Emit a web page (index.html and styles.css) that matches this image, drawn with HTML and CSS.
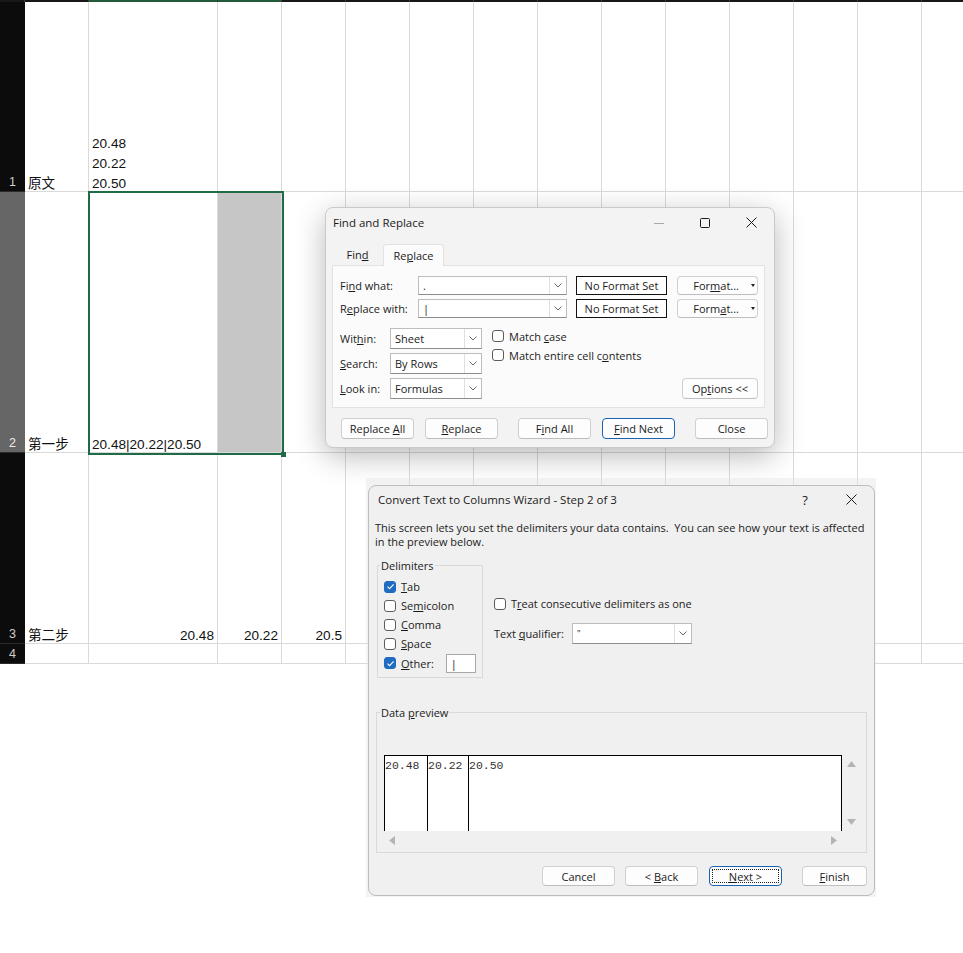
FILE: index.html
```html
<!DOCTYPE html>
<html lang="en">
<head>
  <meta charset="UTF-8">
  <meta name="viewport" content="width=device-width, initial-scale=1.0">
  <title>Text to Columns</title>
  <link rel="stylesheet" href="styles.css">
</head>
<body>
<div class="page">

  <!-- worksheet -->
  <div class="sheet">
    <div class="edge"></div><div class="edge"></div><div class="edge sel"></div><div class="edge sel"></div>
    <div class="edge"></div><div class="edge"></div><div class="edge"></div><div class="edge"></div><div class="edge"></div><div class="edge"></div>
    <div class="edge"></div><div class="edge"></div><div class="edge"></div><div class="edge"></div><div class="edge"></div>

    <div class="rh">1</div>
    <div class="c"><span>原文</span></div>
    <div class="c"><span>20.48<br>20.22<br>20.50</span></div>
    <div class="c"></div>
    <div class="c"></div><div class="c"></div><div class="c"></div><div class="c"></div><div class="c"></div><div class="c"></div>
    <div class="c"></div><div class="c"></div><div class="c"></div><div class="c"></div><div class="c"></div>

    <div class="rh active">2</div>
    <div class="c"><span>第一步</span></div>
    <div class="c"><span>20.48|20.22|20.50</span></div>
    <div class="c shade"></div>
    <div class="c"></div><div class="c"></div><div class="c"></div><div class="c"></div><div class="c"></div><div class="c"></div>
    <div class="c"></div><div class="c"></div><div class="c"></div><div class="c"></div><div class="c"></div>

    <div class="rh">3</div>
    <div class="c"><span>第二步</span></div>
    <div class="c num"><span>20.48</span></div>
    <div class="c num"><span>20.22</span></div>
    <div class="c num"><span>20.5</span></div>
    <div class="c"></div><div class="c"></div><div class="c"></div><div class="c"></div><div class="c"></div>
    <div class="c"></div><div class="c"></div><div class="c"></div><div class="c"></div><div class="c"></div>

    <div class="rh short">4</div>
    <div class="c"></div><div class="c"></div><div class="c"></div>
    <div class="c"></div><div class="c"></div><div class="c"></div><div class="c"></div><div class="c"></div><div class="c"></div>
    <div class="c"></div><div class="c"></div><div class="c"></div><div class="c"></div><div class="c"></div>
  </div>

  <div class="selection"><span class="handle"></span></div>

  <!-- Find and Replace -->
  <div class="find">
    <div class="titlebar">
      <span class="title">Find and Replace</span>
      <div class="winbtns">
        <span class="wb"><svg width="10" height="10" viewBox="0 0 10 10"><line x1="0" y1="5.5" x2="10" y2="5.5" stroke="#a8a8a8" stroke-width="1"/></svg></span>
        <span class="wb"><svg width="10" height="10" viewBox="0 0 10 10"><rect x="0.5" y="0.5" width="9" height="9" rx="1" fill="none" stroke="#1b1b1b" stroke-width="1"/></svg></span>
        <span class="wb"><svg width="11" height="11" viewBox="0 0 11 11"><path d="M0.5 0.5 L10.5 10.5 M10.5 0.5 L0.5 10.5" stroke="#1b1b1b" stroke-width="1"/></svg></span>
      </div>
    </div>

    <div class="tabs">
      <span class="tab"><span>Fin<u>d</u></span></span>
      <span class="tab active"><span>Re<u>p</u>lace</span></span>
    </div>

    <div class="panel">
      <div class="frow">
        <span class="flabel">Fi<u>n</u>d what:</span>
        <div class="combo wide"><span class="val">.</span><span class="arrow"><svg width="8" height="5" viewBox="0 0 8 5"><polyline points="0.5,0.5 4,4 7.5,0.5" fill="none" stroke="#6a6a6a"/></svg></span></div>
        <div class="nofmt">No Format Set</div>
        <div class="btn fmt"><span>For<u>m</u>at...</span><i class="tri"></i></div>
      </div>
      <div class="frow">
        <span class="flabel">R<u>e</u>place with:</span>
        <div class="combo wide"><span class="val">|</span><span class="arrow"><svg width="8" height="5" viewBox="0 0 8 5"><polyline points="0.5,0.5 4,4 7.5,0.5" fill="none" stroke="#6a6a6a"/></svg></span></div>
        <div class="nofmt">No Format Set</div>
        <div class="btn fmt"><span>Form<u>a</u>t...</span><i class="tri"></i></div>
      </div>

      <div class="opts">
        <div class="selects">
          <div class="srow">
            <span class="slabel">Wit<u>h</u>in:</span>
            <div class="combo sel"><span class="val">Sheet</span><span class="arrow"><svg width="8" height="5" viewBox="0 0 8 5"><polyline points="0.5,0.5 4,4 7.5,0.5" fill="none" stroke="#6a6a6a"/></svg></span></div>
          </div>
          <div class="srow">
            <span class="slabel"><u>S</u>earch:</span>
            <div class="combo sel"><span class="val">By Rows</span><span class="arrow"><svg width="8" height="5" viewBox="0 0 8 5"><polyline points="0.5,0.5 4,4 7.5,0.5" fill="none" stroke="#6a6a6a"/></svg></span></div>
          </div>
          <div class="srow">
            <span class="slabel"><u>L</u>ook in:</span>
            <div class="combo sel"><span class="val">Formulas</span><span class="arrow"><svg width="8" height="5" viewBox="0 0 8 5"><polyline points="0.5,0.5 4,4 7.5,0.5" fill="none" stroke="#6a6a6a"/></svg></span></div>
          </div>
        </div>
        <div class="checks">
          <div class="crow"><span class="cb"></span><span>Match <u>c</u>ase</span></div>
          <div class="crow"><span class="cb"></span><span>Match entire cell c<u>o</u>ntents</span></div>
        </div>
        <div class="btn options"><span>Op<u>t</u>ions &lt;&lt;</span></div>
      </div>
    </div>

    <div class="actions">
      <div class="btn"><span>Replace <u>A</u>ll</span></div>
      <div class="btn gap-s"><span><u>R</u>eplace</span></div>
      <div class="btn gap-l"><span>F<u>i</u>nd All</span></div>
      <div class="btn gap-s default"><span><u>F</u>ind Next</span></div>
      <div class="btn gap-l"><span>Close</span></div>
    </div>
  </div>

  <!-- Convert Text to Columns Wizard -->
  <div class="wiz-frame">
    <div class="wiz">
      <div class="titlebar wiz-title">
        <span class="title">Convert Text to Columns Wizard - Step 2 of 3</span>
        <div class="winbtns">
          <span class="wb help">?</span>
          <span class="wb"><svg width="11" height="11" viewBox="0 0 11 11"><path d="M0.5 0.5 L10.5 10.5 M10.5 0.5 L0.5 10.5" stroke="#1b1b1b" stroke-width="1"/></svg></span>
        </div>
      </div>

      <p class="desc">This screen lets you set the delimiters your data contains.&nbsp; You can see how your text is affected<br>in the preview below.</p>

      <div class="wiz-body">
        <fieldset class="group delims">
          <legend>Delimiters</legend>
          <div class="drow"><span class="cb on"><svg width="9" height="9" viewBox="0 0 9 9"><polyline points="1.5,4.6 3.6,6.6 7.6,2.4" fill="none" stroke="#fff" stroke-width="1.1"/></svg></span><span><u>T</u>ab</span></div>
          <div class="drow"><span class="cb"></span><span>Se<u>m</u>icolon</span></div>
          <div class="drow"><span class="cb"></span><span><u>C</u>omma</span></div>
          <div class="drow"><span class="cb"></span><span><u>S</u>pace</span></div>
          <div class="drow other"><span class="cb on"><svg width="9" height="9" viewBox="0 0 9 9"><polyline points="1.5,4.6 3.6,6.6 7.6,2.4" fill="none" stroke="#fff" stroke-width="1.1"/></svg></span><span><u>O</u>ther:</span><span class="otherbox">|</span></div>
        </fieldset>

        <div class="wiz-right">
          <div class="crow treat"><span class="cb"></span><span>T<u>r</u>eat consecutive delimiters as one</span></div>
          <div class="qrow">
            <span class="qlabel">Text <u>q</u>ualifier:</span>
            <div class="combo qual"><span class="val">"</span><span class="arrow"><svg width="8" height="5" viewBox="0 0 8 5"><polyline points="0.5,0.5 4,4 7.5,0.5" fill="none" stroke="#6a6a6a"/></svg></span></div>
          </div>
        </div>
      </div>

      <fieldset class="group preview-group">
        <legend>Data <u>p</u>review</legend>
        <div class="preview-grid">
          <div class="preview">
            <span class="pcol first">20.48</span>
            <span class="pcol">20.22</span>
            <span class="pcol last">20.50</span>
          </div>
          <div class="vscroll">
            <svg width="9" height="6" viewBox="0 0 9 6"><polygon points="0,6 4.5,0 9,6" fill="#b4b4b4"/></svg>
            <svg width="9" height="6" viewBox="0 0 9 6"><polygon points="0,0 4.5,6 9,0" fill="#b4b4b4"/></svg>
          </div>
          <div class="hscroll">
            <svg width="6" height="9" viewBox="0 0 6 9"><polygon points="6,0 0,4.5 6,9" fill="#b4b4b4"/></svg>
            <svg width="6" height="9" viewBox="0 0 6 9"><polygon points="0,0 6,4.5 0,9" fill="#b4b4b4"/></svg>
          </div>
        </div>
      </fieldset>

      <div class="wiz-actions">
        <div class="btn"><span>Cancel</span></div>
        <div class="btn w-back"><span>&lt; <u>B</u>ack</span></div>
        <div class="btn w-next default"><span class="focus"><span><u>N</u>ext &gt;</span></span></div>
        <div class="btn w-finish"><span><u>F</u>inish</span></div>
      </div>
    </div>
  </div>

</div>
</body>
</html>
```

FILE: styles.css
```css
body {
  margin: 0;
  background: #fff;
  font-family: "Liberation Sans", "Noto Sans CJK SC", sans-serif;
}
.page {
  position: relative;
  width: 963px;
  height: 953px;
  overflow: hidden;
}

/* worksheet */
.sheet {
  display: grid;
  grid-template-columns: 25px 64px 129px repeat(12, 64px);
  grid-template-rows: 2px 190px 261px 191px 20px;
}
.edge {
  background: #181818;
  border-right: 1px solid #3c3c3c;
}
.edge.sel {
  background: #235a3c;
}
.rh {
  display: flex;
  align-items: flex-end;
  justify-content: center;
  padding-bottom: 2px;
  background: #0c0c0c;
  border-bottom: 1px solid #2b2b2b;
  color: #cdcdcd;
  font-size: 12.5px;
  line-height: 14px;
}
.rh.active {
  background: #666;
  color: #eee;
}
.c {
  display: flex;
  align-items: flex-end;
  padding: 0 3px;
  border-right: 1px solid #dadada;
  border-bottom: 1px solid #dadada;
  font-size: 13.6px;
  line-height: 20px;
  color: #111;
  white-space: nowrap;
}
.c span {
  margin-bottom: -3px;
}
.c.num {
  justify-content: flex-end;
}
.c.shade {
  background: #c6c6c6;
}
.selection {
  position: absolute;
  left: 88px;
  top: 191px;
  width: 196px;
  height: 264px;
  box-sizing: border-box;
  border: 2px solid #1f6b45;
}
.handle {
  position: absolute;
  right: -4px;
  bottom: -4px;
  width: 5px;
  height: 5px;
  background: #1f6b45;
}

/* shared dialog bits */
.find, .wiz {
  font-family: "Open Sans", "Noto Sans", sans-serif;
  font-size: 11px;
  color: #1b1b1b;
}
u {
  text-underline-offset: 1px;
}
.titlebar {
  display: flex;
  align-items: center;
  height: 29px;
}
.title {
  padding-left: 7px;
  font-size: 11.5px;
}
.winbtns {
  display: flex;
  margin-left: auto;
  height: 100%;
}
.wb {
  display: flex;
  align-items: center;
  justify-content: center;
  width: 46px;
  height: 100%;
}
.btn {
  display: flex;
  align-items: center;
  justify-content: center;
  box-sizing: border-box;
  height: 21px;
  background: #fdfdfd;
  border: 1px solid #d0d0d0;
  border-bottom-color: #bdbdbd;
  border-radius: 4px;
  white-space: nowrap;
}
.btn.default {
  border-color: #1a63b0;
}
.combo {
  display: flex;
  box-sizing: border-box;
  background: #fff;
  border: 1px solid #bdbdbd;
  border-bottom-color: #8c8c8c;
}
.combo .val {
  flex: 1;
  padding-left: 4px;
  line-height: 17px;
}
.combo .arrow {
  display: flex;
  align-items: center;
  justify-content: center;
  width: 16px;
  border-left: 1px solid #e0e0e0;
}
.cb {
  display: inline-flex;
  align-items: center;
  justify-content: center;
  box-sizing: border-box;
  width: 12px;
  height: 12px;
  margin-right: 5px;
  background: #fff;
  border: 1px solid #5c5c5c;
  border-radius: 3px;
}
.cb.on {
  background: #1f6cc0;
  border-color: #1f6cc0;
}
.crow {
  display: flex;
  align-items: center;
  white-space: nowrap;
}

/* Find and Replace */
.find {
  position: absolute;
  left: 325px;
  top: 207px;
  width: 450px;
  height: 241px;
  box-sizing: border-box;
  background: #f3f3f3;
  border: 1px solid #cacaca;
  border-radius: 8px;
  box-shadow: 0 8px 30px rgba(0, 0, 0, 0.28);
}
.tabs {
  display: flex;
  margin-top: 7px;
  padding-left: 6px;
  height: 21px;
}
.tab {
  display: flex;
  align-items: center;
  justify-content: center;
  width: 51px;
  box-sizing: border-box;
}
.tab.active {
  position: relative;
  width: 61px;
  height: 22px;
  background: #fbfbfb;
  border: 1px solid #e2e2e2;
  border-bottom: none;
  border-radius: 3px 3px 0 0;
}
.panel {
  box-sizing: border-box;
  height: 143px;
  margin: 0 9px 0 6px;
  padding: 10px 6px 8px 7px;
  background: #fbfbfb;
  border: 1px solid #e2e2e2;
}
.frow {
  display: flex;
  align-items: center;
  height: 19px;
}
.frow + .frow {
  margin-top: 4px;
}
.flabel {
  width: 78px;
}
.combo.wide {
  width: 149px;
  height: 19px;
}
.nofmt {
  box-sizing: border-box;
  width: 91px;
  height: 19px;
  margin-left: 9px;
  background: #fff;
  border: 1px solid #111;
  text-align: center;
  line-height: 17px;
}
.btn.fmt {
  justify-content: flex-end;
  width: 81px;
  height: 19px;
  margin-left: 10px;
  padding-right: 2px;
}
.tri {
  width: 0;
  height: 0;
  margin-left: 12px;
  border-left: 2.5px solid transparent;
  border-right: 2.5px solid transparent;
  border-top: 3px solid #222;
}
.opts {
  display: flex;
  margin-top: 10px;
}
.selects {
  display: flex;
  flex-direction: column;
  gap: 4px;
}
.srow {
  display: flex;
  align-items: center;
  height: 21px;
}
.slabel {
  width: 50px;
}
.combo.sel {
  width: 92px;
  height: 21px;
}
.combo.sel .val {
  line-height: 19px;
}
.checks {
  display: flex;
  flex-direction: column;
  gap: 3px;
  margin-left: 10px;
}
.checks .crow {
  height: 16px;
}
.btn.options {
  align-self: flex-end;
  width: 76px;
  margin-left: auto;
}
.actions {
  display: flex;
  margin-top: 10px;
  padding-left: 15px;
}
.actions .btn {
  width: 73px;
}
.actions .gap-s {
  margin-left: 11px;
}
.actions .gap-l {
  margin-left: 20px;
}

/* Convert Text to Columns Wizard */
.wiz-frame {
  position: absolute;
  left: 366px;
  top: 478px;
  width: 510px;
  height: 419px;
  box-sizing: border-box;
  padding: 7px 1px 1px 2px;
  background: rgba(228, 228, 228, 0.45);
}
.wiz {
  box-sizing: border-box;
  height: 411px;
  background: #f0f0f0;
  border: 1px solid #bdbdbd;
  border-radius: 8px;
}
.wiz-title {
  height: 27px;
}
.wiz-title .title {
  padding-left: 9px;
}
.wb.help {
  font-size: 13px;
}
.desc {
  margin: 8px 0 0 6px;
  line-height: 14px;
}
.wiz-body {
  display: flex;
  margin-top: 9px;
  padding-left: 8px;
}
.group {
  margin: 0;
  border: 1px solid #d9d9d9;
}
.group legend {
  margin-left: -4px;
  padding: 0 1px;
  line-height: 15px;
}
.delims {
  box-sizing: border-box;
  width: 106px;
  padding: 4px 6px 4px 6px;
}
.drow {
  display: flex;
  align-items: center;
  height: 19px;
}
.drow.other {
  height: 20px;
}
.otherbox {
  box-sizing: border-box;
  width: 30px;
  height: 19px;
  margin-left: 12px;
  padding-left: 4px;
  background: #fff;
  border: 1px solid #a8a8a8;
  line-height: 17px;
}
.wiz-right {
  margin-left: 11px;
}
.treat {
  height: 19px;
  margin-top: 36px;
}
.qrow {
  display: flex;
  align-items: center;
  margin-top: 10px;
}
.qlabel {
  width: 78px;
}
.combo.qual {
  width: 120px;
  height: 21px;
}
.combo.qual .val {
  line-height: 19px;
  font-size: 9px;
}
.preview-group {
  margin: 27px 7px 0 7px;
  padding: 35px 7px 3px 7px;
}
.preview-grid {
  display: grid;
  grid-template-columns: 458px 17px;
  grid-template-rows: 76px 18px;
}
.preview {
  display: flex;
  box-sizing: border-box;
  background: #fff;
  border: 1px solid #000;
  border-bottom: none;
  font-family: "Liberation Mono", monospace;
  font-size: 11.5px;
  line-height: 13px;
  color: #333;
}
.pcol {
  padding-top: 3px;
}
.pcol.first {
  width: 42px;
}
.pcol:not(.first) {
  width: 40px;
  border-left: 1px solid #000;
}
.pcol.last {
  flex: 1;
}
.vscroll {
  display: flex;
  flex-direction: column;
  align-items: center;
  justify-content: space-between;
  padding: 6px 0 6px 2px;
}
.hscroll {
  display: flex;
  align-items: center;
  justify-content: space-between;
  padding: 0 5px 0 5px;
}
.wiz-actions {
  display: flex;
  justify-content: flex-end;
  margin-top: 13px;
  padding-right: 7px;
}
.wiz-actions .btn {
  width: 73px;
  height: 20px;
}
.wiz-actions .w-back {
  margin-left: 10px;
}
.wiz-actions .w-next {
  margin-left: 11px;
  padding: 2px;
}
.wiz-actions .w-finish {
  width: 65px;
  margin-left: 20px;
}
.focus {
  display: flex;
  align-items: center;
  justify-content: center;
  width: 100%;
  height: 100%;
  box-sizing: border-box;
  border: 1px dotted #222;
}
```
